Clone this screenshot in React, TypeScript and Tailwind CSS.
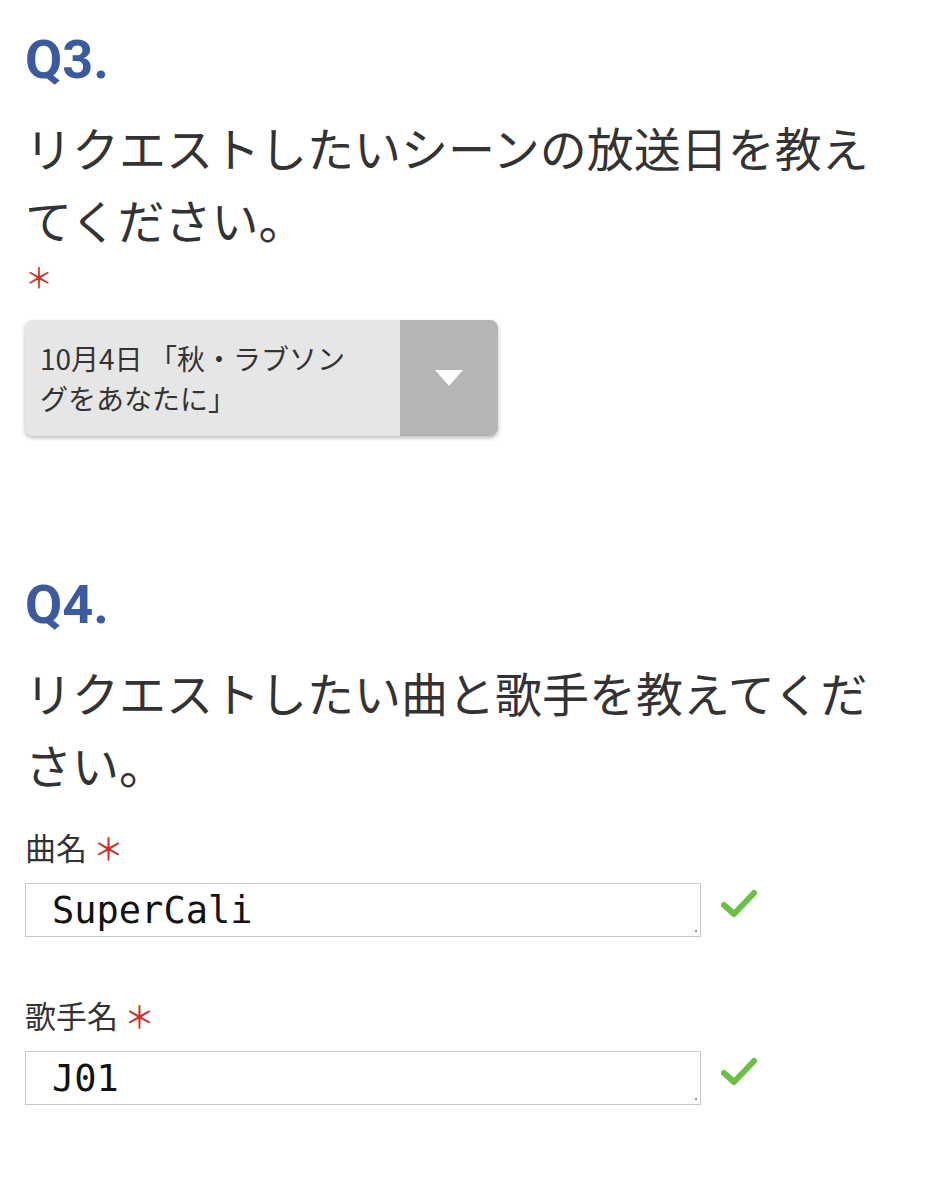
import React from "react";

const jp = "font-['Noto_Sans_CJK_JP','Noto_Sans',sans-serif]";

const Check: React.FC = () => (
  <svg width="36" height="30" viewBox="0 0 36 30" className="ml-[20px] -mt-[12px]">
    <path
      d="M3 16 L13 25 L33 4"
      fill="none"
      stroke="#6cbf47"
      strokeWidth="6"
      strokeLinecap="round"
      strokeLinejoin="round"
    />
  </svg>
);

const Field: React.FC<{ label: string; value: string; top: string }> = ({ label, value, top }) => (
  <div className={top}>
    <div className={`${jp} text-[31px] leading-[40px] text-[#333]`}>
      {label}
      <span className="text-[#c8302a] ml-[6px]">＊</span>
    </div>
    <div className="flex items-center mt-[16px]">
      <div className="relative w-[676px] h-[54px] border border-[#c8c8c8] bg-white flex items-center pl-[26px]">
        <span className="font-['DejaVu_Sans_Mono',monospace] text-[37px] leading-none text-[#111]">
          {value}
        </span>
        <span className="absolute right-[3px] bottom-[4px] w-[2px] h-[2px] rounded-full bg-[#777]" />
      </div>
      <Check />
    </div>
  </div>
);

const Question: React.FC<{ no: string; top: string; children: React.ReactNode }> = ({ no, top, children }) => (
  <div className={top}>
    <h2 className="font-['Roboto',sans-serif] font-bold text-[54px] leading-[54px] text-[#3b5b9e]">{no}</h2>
    <p className={`${jp} mt-[24px] text-[47px] leading-[72px] text-[#333] pr-[40px]`}>{children}</p>
  </div>
);

export default function App() {
  return (
    <div className="bg-white min-h-[1200px] w-[934px] px-[25px] pt-[33px]">
      {/* Q3 */}
      <Question no="Q3." top="">
        リクエストしたいシーンの放送日を教えてください。
      </Question>
      <div className={`${jp} mt-[2px] text-[28px] leading-[40px] text-[#c8302a]`}>＊</div>

      <div className="mt-[23px] w-[473px] h-[116px] flex rounded-[8px] overflow-hidden bg-[#e6e6e6] shadow-[0_2px_4px_rgba(0,0,0,0.28)]">
        <div className={`${jp} flex-1 pl-[15px] pr-[28px] py-[18px] text-[28px] leading-[40px] text-[#333]`}>
          10月4日 「秋・ラブソングをあなたに」
        </div>
        <div className="w-[98px] bg-[#b5b5b5] flex items-center justify-center">
          <svg width="30" height="18" viewBox="0 0 30 18">
            <path d="M1 1 H29 L15 17 Z" fill="#fff" />
          </svg>
        </div>
      </div>

      {/* Q4 */}
      <Question no="Q4." top="mt-[142px]">
        リクエストしたい曲と歌手を教えてください。
      </Question>

      <Field label="曲名" value="SuperCali" top="mt-[27px]" />
      <Field label="歌手名" value="J01" top="mt-[58px]" />
    </div>
  );
}
